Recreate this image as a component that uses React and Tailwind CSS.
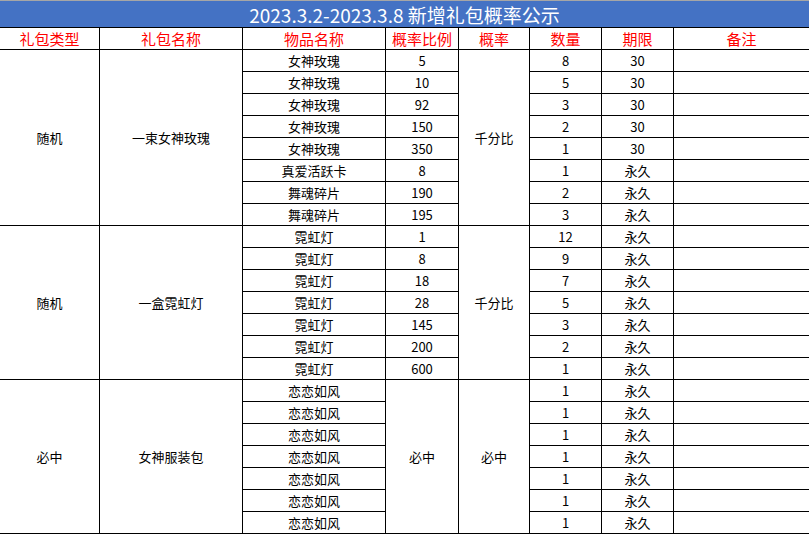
import React from "react";

const font = { fontFamily: '"Noto Sans CJK SC", "Noto Sans", sans-serif' };

const g1 = [
  ["女神玫瑰", "5", "8", "30"],
  ["女神玫瑰", "10", "5", "30"],
  ["女神玫瑰", "92", "3", "30"],
  ["女神玫瑰", "150", "2", "30"],
  ["女神玫瑰", "350", "1", "30"],
  ["真爱活跃卡", "8", "1", "永久"],
  ["舞魂碎片", "190", "2", "永久"],
  ["舞魂碎片", "195", "3", "永久"],
];
const g2 = [
  ["霓虹灯", "1", "12", "永久"],
  ["霓虹灯", "8", "9", "永久"],
  ["霓虹灯", "18", "7", "永久"],
  ["霓虹灯", "28", "5", "永久"],
  ["霓虹灯", "145", "3", "永久"],
  ["霓虹灯", "200", "2", "永久"],
  ["霓虹灯", "600", "1", "永久"],
];
const headers = ["礼包类型", "礼包名称", "物品名称", "概率比例", "概率", "数量", "期限", "备注"];

const cell = "flex items-center justify-center border-r border-b border-black text-[13px] text-black leading-none";

export default function App() {
  return (
    <div className="w-[809px] h-[535px] overflow-hidden bg-white" style={font}>
      <div className="h-[27px] border-t border-[#a6a6a6] bg-[#4472c4] flex items-center justify-center text-white text-[19px] leading-none">
        2023.3.2-2023.3.8 新增礼包概率公示
      </div>
      <div className="grid grid-cols-[100px_143px_143px_73px_71px_72px_72px_135px] auto-rows-[22px] border-t border-black">
        {headers.map((h, i) => (
          <div key={h} className={`${cell} text-[15px] !text-[#ff0000] ${i === 7 ? "border-r-0" : ""}`}>{h}</div>
        ))}
        {g1.map((r, i) => (
          <React.Fragment key={"a" + i}>
            {i === 0 && <div className={`${cell} row-span-8`}>随机</div>}
            {i === 0 && <div className={`${cell} row-span-8`}>一束女神玫瑰</div>}
            <div className={cell}>{r[0]}</div>
            <div className={cell}>{r[1]}</div>
            {i === 0 && <div className={`${cell} row-span-8`}>千分比</div>}
            <div className={cell}>{r[2]}</div>
            <div className={cell}>{r[3]}</div>
            <div className={`${cell} border-r-0`}></div>
          </React.Fragment>
        ))}
        {g2.map((r, i) => (
          <React.Fragment key={"b" + i}>
            {i === 0 && <div className={`${cell} row-span-7`}>随机</div>}
            {i === 0 && <div className={`${cell} row-span-7`}>一盒霓虹灯</div>}
            <div className={cell}>{r[0]}</div>
            <div className={cell}>{r[1]}</div>
            {i === 0 && <div className={`${cell} row-span-7`}>千分比</div>}
            <div className={cell}>{r[2]}</div>
            <div className={cell}>{r[3]}</div>
            <div className={`${cell} border-r-0`}></div>
          </React.Fragment>
        ))}
        {Array.from({ length: 7 }).map((_, i) => (
          <React.Fragment key={"c" + i}>
            {i === 0 && <div className={`${cell} row-span-7`}>必中</div>}
            {i === 0 && <div className={`${cell} row-span-7`}>女神服装包</div>}
            <div className={cell}>恋恋如风</div>
            {i === 0 && <div className={`${cell} row-span-7`}>必中</div>}
            {i === 0 && <div className={`${cell} row-span-7`}>必中</div>}
            <div className={cell}>1</div>
            <div className={cell}>永久</div>
            <div className={`${cell} border-r-0`}></div>
          </React.Fragment>
        ))}
      </div>
    </div>
  );
}
